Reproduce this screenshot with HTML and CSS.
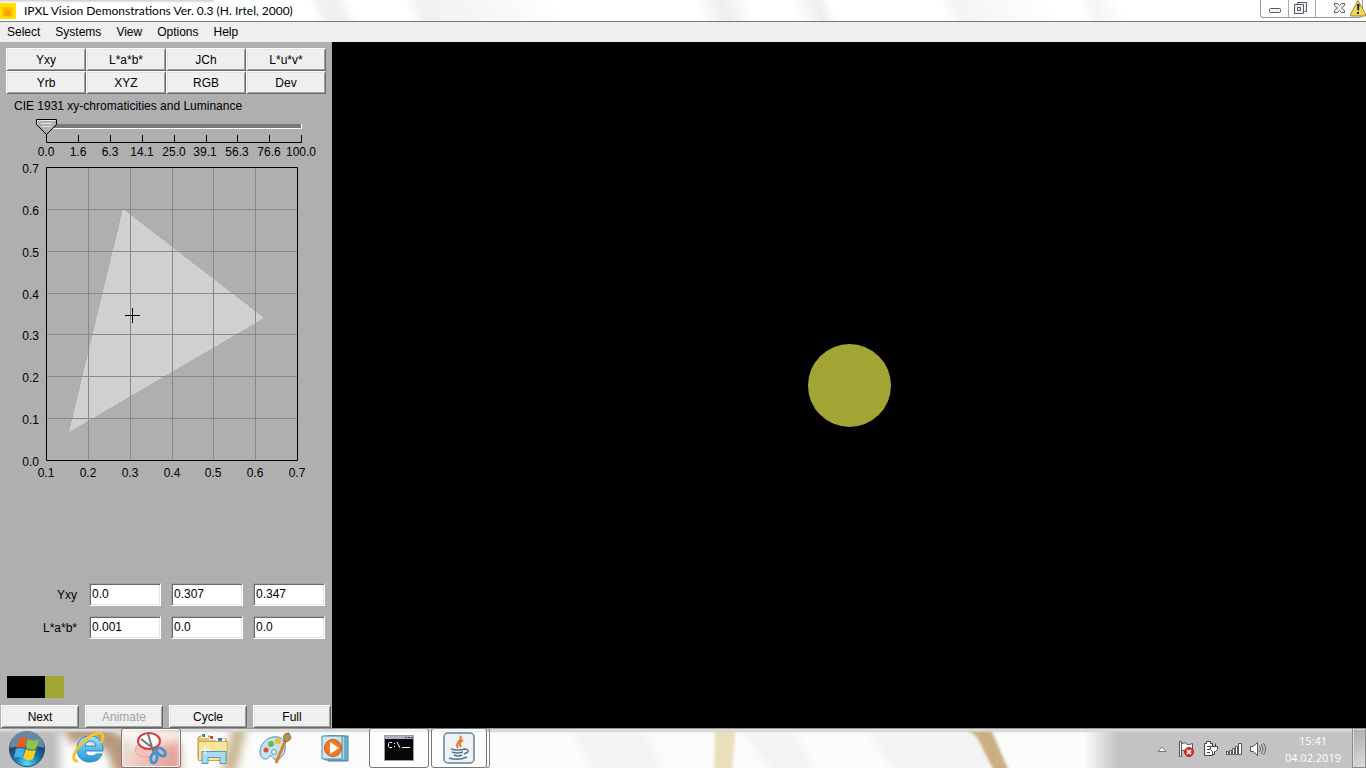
FILE: index.html
```html
<!DOCTYPE html>
<html lang="en">
<head>
<meta charset="utf-8">
<title>IPXL Vision Demonstrations Ver. 0.3 (H. Irtel, 2000)</title>
<link rel="stylesheet" href="styles.css">
</head>
<body>
<div class="screen">
  <header class="titlebar">
    <svg class="app-icon" viewBox="0 0 16 16" width="16" height="16" aria-hidden="true"><path fill="#ffe000" d="M0 0h16v16H0z"/><path fill="#ffc400" d="M2 4h11v10H2z"/><path fill="#ffab00" d="M4 6h7v7H4z"/><path fill="#ff9500" d="M6 8h4v4H6z"/></svg>
    <h1 class="title">IPXL Vision Demonstrations Ver. 0.3 (H. Irtel, 2000)</h1>
    <div class="window-controls">
      <button class="wc" aria-label="Minimize"><svg viewBox="0 0 27 17" width="27" height="17"><rect x="8.500" y="8.500" width="11" height="4" rx="1" fill="#f4f4f4" stroke="#555668"/></svg></button>
      <button class="wc wc-restore" aria-label="Restore"><svg viewBox="0 0 26 17" width="26" height="17"><path fill="#eee" stroke="#555668" d="M8.500 4.500v-2h9v9h-2M5.500 4.500h9v9h-9zM8.500 7.500h3v3h-3z"/></svg></button>
      <button class="wc wc-close" aria-label="Close"><svg viewBox="0 0 46 17" width="46" height="17"><path fill="#f4f4f4" stroke="#555668" d="M18.500 3.500h3l2 2 2-2h3v2l-3 2.500 3 2.500v2h-3l-2-2-2 2h-3v-2l3-2.500-3-2.500z"/></svg></button>
    </div>
    <svg class="warning" viewBox="0 0 16 17" width="16" height="17" aria-hidden="true"><path fill="#efd45e" stroke="#a28b30" d="M8 .5 15.500 14v2H.5v-2z"/><path fill="#222" d="M7 4h2.500L9 10.500H7.500zM7 12h2v2H7z"/></svg>
  </header>
  <nav class="menubar" aria-label="Application menu">
    <button class="menu">Select</button><button class="menu">Systems</button><button class="menu">View</button><button class="menu">Options</button><button class="menu">Help</button>
  </nav>
  <main class="workspace">
    <section class="panel" aria-label="Color controls">
      <div class="systems">
        <button class="btn">Yxy</button><button class="btn">L*a*b*</button><button class="btn">JCh</button><button class="btn">L*u*v*</button>
        <button class="btn">Yrb</button><button class="btn">XYZ</button><button class="btn">RGB</button><button class="btn">Dev</button>
      </div>
      <label class="caption" for="luminance">CIE 1931 xy-chromaticities and Luminance</label>
      <input class="slider" id="luminance" type="range" min="0" max="100" value="0">
      <svg class="scale" viewBox="0 0 332 27" width="332" height="27">
        <path d="M46.500 0v8.500h255V1M78.500 1v7M110.500 1v7M142.500 1v7M174.500 1v7M206.500 1v7M237.500 1v7M269.500 1v7" fill="none" stroke="#000"/>
        <g class="tick-x"><text x="46" y="22">0.0</text><text x="78" y="22">1.6</text><text x="110" y="22">6.3</text><text x="142" y="22">14.1</text><text x="174" y="22">25.0</text><text x="205" y="22">39.1</text><text x="237" y="22">56.3</text><text x="269" y="22">76.6</text><text x="301" y="22">100.0</text></g>
      </svg>
      <svg class="plot" viewBox="0 0 332 320" width="332" height="320" role="img" aria-label="xy chromaticity diagram">
        <path fill="#d0d0d0" shape-rendering="crispEdges" d="M123 48 264 157 69 271z"/>
        <path fill="none" stroke="#898989" d="M88.500 7v292M130.500 7v292M172.500 7v292M213.500 7v292M255.500 7v292M47 48.500h250M47 90.500h250M47 132.500h250M47 173.500h250M47 215.500h250M47 257.500h250"/>
        <path fill="none" stroke="#000" d="M46.500 6.500h251v293h-251zM125 154.500h15M132.500 147v15"/>
        <g class="tick-y"><text x="39" y="12">0.7</text><text x="39" y="54">0.6</text><text x="39" y="96">0.5</text><text x="39" y="138">0.4</text><text x="39" y="179">0.3</text><text x="39" y="221">0.2</text><text x="39" y="263">0.1</text><text x="39" y="305">0.0</text></g>
        <g class="tick-x"><text x="46" y="316">0.1</text><text x="88" y="316">0.2</text><text x="130" y="316">0.3</text><text x="172" y="316">0.4</text><text x="213" y="316">0.5</text><text x="255" y="316">0.6</text><text x="297" y="316">0.7</text></g>
      </svg>
      <div class="lower">
        <div class="fields">
          <label for="f-y">Yxy</label><input id="f-y" value="0.0"><input aria-label="x" value="0.307"><input aria-label="y" value="0.347">
          <label for="f-l">L*a*b*</label><input id="f-l" value="0.001"><input aria-label="a*" value="0.0"><input aria-label="b*" value="0.0">
        </div>
        <div class="swatches"><span></span><span></span><span class="olive"></span></div>
        <div class="actions"><button class="btn">Next</button><button class="btn" disabled>Animate</button><button class="btn">Cycle</button><button class="btn">Full</button></div>
      </div>
    </section>
    <section class="canvas" aria-label="Stimulus"><div class="disc"></div></section>
  </main>
  <footer class="taskbar">
    <svg class="backdrop" viewBox="0 0 1366 40" preserveAspectRatio="none" aria-hidden="true">
      <defs>
        <filter id="soft" x="-20%" y="-50%" width="140%" height="200%"><feGaussianBlur stdDeviation="4"/></filter>
        <filter id="soft2" x="-50%" y="-20%" width="200%" height="140%"><feGaussianBlur stdDeviation="1.500"/></filter>
        <linearGradient id="edge"><stop offset="0" stop-color="#c3c3c3" stop-opacity="0"/><stop offset=".12" stop-color="#c3c3c3"/><stop offset="1" stop-color="#c3c3c3"/></linearGradient>
        <linearGradient id="top" x2="0" y2="1"><stop offset="0" stop-color="#777"/><stop offset=".35" stop-color="#eee"/><stop offset=".6" stop-color="#ccc"/><stop offset="1" stop-color="#ddd" stop-opacity="0"/></linearGradient>
      </defs>
      <path fill="#fcfcfc" d="M0 0h1366v40H0z"/>
      <g filter="url(#soft)">
        <path fill="#bebebe" d="M-20-10h80v60h-80z"/>
        <path fill="#b59a7b" d="M60-5h40l34 20-6 30h-14l-6-20-18-14-18 6z"/>
        <path fill="#d98877" d="M120 30l22-12 38-4v34h-60z"/>
        <path fill="#c9b797" d="M234-5h14l-12 50h-16z"/>
        <path fill="#f3f3f3" d="M570 0h72l22 44h-70zM740 0h52l24 44h-44zM866 0h124v44h-96z"/>
      </g>
      <g filter="url(#soft2)"><path fill="#e9dfbd" d="M715-3h21l-4 46h-18z"/><path fill="#cbaf83" d="M962-3h27l20 46h-15L977 9z"/></g>
      <path fill="url(#edge)" d="M1084 0h282v40h-282z"/>
      <path fill="url(#top)" d="M0 0h1366v5H0z"/>
    </svg>
    <button class="start" aria-label="Start">
      <svg viewBox="0 0 38 38" width="38" height="38"><defs><radialGradient id="orb" cx=".5" cy=".92" r=".85"><stop offset="0" stop-color="#4fe0ff"/><stop offset=".4" stop-color="#1a78ad"/><stop offset=".8" stop-color="#163c66"/></radialGradient></defs><circle cx="19" cy="19" r="17.500" fill="url(#orb)" stroke="#2b4d70"/><path fill="#bcd1df" opacity=".5" d="M2 18a17 17 0 0 1 34 0C28 15 11 15 2 18z"/><path fill="#ea5b22" d="M11 9q4-3 8-1l-2 10q-4-2-9 0z"/><path fill="#8dc63f" d="M20 9q4 3 11 0l-3 10q-5 2-10-1z"/><path fill="#46b0ea" d="M8 19q4-2 9 0l-3 9q-4-2-8 0z"/><path fill="#ffc91d" d="M18 19q4 3 10 1l-3 9q-5 3-10-1z"/></svg>
    </button>
    <div class="tasks">
      <button class="task" aria-label="Internet Explorer"><svg viewBox="0 0 34 34" width="34" height="34"><defs><linearGradient id="ie" x2="0" y2="1"><stop offset="0" stop-color="#9be3fb"/><stop offset="1" stop-color="#2694d4"/></linearGradient></defs><path fill="url(#ie)" stroke="#278bc4" fill-rule="evenodd" d="M31 20H13q1 5 6 5 4 0 5-2h6q-3 8-12 8C10 31 5 26 5 18S10 5 18 5s14 6 13 15zM13 15h11q-1-5-5.500-5T13 15z"/><path fill="none" stroke="#f6c129" stroke-width="3" d="M6 30C-1 31 1 20 11 11S31-1 31 6q0 3-2 6"/></svg></button>
      <button class="task open snip" aria-label="Snipping Tool"><svg viewBox="0 0 34 36" width="34" height="36"><ellipse cx="12" cy="20" rx="11" ry="7" fill="#f5bfba" stroke="#e8a09c"/><ellipse cx="15" cy="11" rx="11" ry="8" fill="#fff" fill-opacity=".9" stroke="#d8393e" stroke-width="2"/><path fill="none" stroke="#71777b" stroke-width="2" d="M7 9l17 13M14 4l6 20"/><ellipse cx="27" cy="22" rx="3" ry="5" transform="rotate(-50 27 22)" fill="none" stroke="#3b96d0" stroke-width="3"/><ellipse cx="20" cy="28" rx="3" ry="5" transform="rotate(10 20 28)" fill="none" stroke="#3b96d0" stroke-width="3"/></svg></button>
      <button class="task" aria-label="Explorer"><svg viewBox="0 0 34 34" width="34" height="34"><path fill="#e7c665" stroke="#b8923d" d="M4 5h10l2 3h14v20H2V7z"/><path fill="#fff" d="M5 4h7v3H5zM13 6h8v3h-8zM20 8h9v3h-9z"/><path fill="#27a344" d="M6 3h3v3H6z"/><path fill="#d14831" d="M14 5h3v3h-3z"/><path fill="#268bcb" d="M22 7h4v3h-4z"/><path fill="#f8e49d" stroke="#cca64c" d="M2.500 10.500h29l-1 19h-28z"/><path fill="#a9dbed" stroke="#529cc0" d="M6 20.500h24v12h-6v-6H12v6H6z"/><path stroke="#fff" d="M9 15v9M5 19h9"/></svg></button>
      <button class="task" aria-label="Paint"><svg viewBox="0 0 34 34" width="34" height="34"><path fill="#c4e2ef" stroke="#4f91b5" d="M20 6C9 4 1 15 2 22c1 6 6 8 9 4 3-5 4 6 10 2 8-4 9-20-1-22z"/><circle cx="8" cy="19" r="2.500" fill="#e34c3a"/><circle cx="13" cy="13" r="3" fill="#68b948"/><circle cx="20" cy="10" r="3" fill="#efbd2c"/><circle cx="16" cy="21" r="2.500" fill="#fff" stroke="#4f91b5"/><path stroke="#d58029" stroke-width="3" d="M28 8L18 32"/><path fill="#b88d58" stroke="#8f6a3d" d="M26 9q-2-7 5-7l2 5q-2 4-6 4z"/></svg></button>
      <button class="task" aria-label="Media Player"><svg viewBox="0 0 34 34" width="34" height="34"><path fill="#75b9da" stroke="#447d9a" d="M8 5h20v25H8z"/><path fill="#a9d6e9" stroke="#508ba7" d="M5 5h20v24H5z"/><path fill="#c9e6f1" stroke="#508ba7" d="M2 5h20v23H2z"/><circle cx="13" cy="17" r="8.500" fill="#f37921" stroke="#ca5613"/><path fill="#fff" d="M10 11l9 6-9 6z"/></svg></button>
      <button class="task open" aria-label="Command Prompt"><svg viewBox="0 0 30 26" width="30" height="26"><path fill="#080808" stroke="#969da5" d="M.5.500h29v25H.5z"/><path fill="#aab3bf" d="M1 1h28v3H1z"/><path stroke="#39424f" stroke-dasharray="2 1" d="M21 2.500h8"/><path fill="none" stroke="#fff" d="M8 7.500H5.500L4.500 8.500v3l1 1H8M10 8.500h1M10 11.500h1M13 7l3 6M18 12.500h8"/></svg></button>
      <button class="task open java" aria-label="Java"><svg viewBox="0 0 32 32" width="32" height="32"><rect x="1" y="1" width="30" height="30" rx="4" fill="#eff1f2" stroke="#60849b" stroke-width="1.500"/><path fill="none" stroke="#ee7625" stroke-width="2" d="M17 4c4 4-6 6-2 12M20 8c-4 2-4 4-2 7"/><path fill="none" stroke="#4d7797" stroke-width="1.500" d="M8 17q7 2 14 0M9 20q5 2 11 0M11 23q4 2 8 0M21 17q5 0 4 3l-4 2M6 26q9 3 18-1"/></svg></button>
      <span class="stack"></span>
    </div>
    <div class="tray">
      <button class="tray-icon" aria-label="Show hidden icons"><svg viewBox="0 0 16 16" width="16" height="16"><path fill="#fff" stroke="#6b7480" d="M4 10.500h8L8 6z"/></svg></button>
      <button class="tray-icon" aria-label="Action Center"><svg viewBox="0 0 16 16" width="16" height="16"><path fill="#fff" stroke="#555" d="M1.500.5h2v15h-2zM3.500 2.500q4-2 6 1 3 0 5-1v7h-11z"/><circle cx="11" cy="11" r="4.500" fill="#d83b30" stroke="#b11e18"/><path stroke="#fff" stroke-width="1.500" d="M9 9l4 4M13 9l-4 4"/></svg></button>
      <button class="tray-icon" aria-label="Power"><svg viewBox="0 0 16 16" width="16" height="16"><path fill="#fff" stroke="#444" d="M2.500 2.500h2v-2h4v2h2v12h-8z"/><path fill="none" stroke="#444" d="M5 5.500h3M5 8.500h3M5 11.500h3"/><path fill="#fff" stroke="#444" d="M8.500 5.500h7v3l-2 2h-1v3h-2v-3l-2-2zM10.500 2.500v3M13.500 2.500v3"/></svg></button>
      <button class="tray-icon" aria-label="Network"><svg viewBox="0 0 16 16" width="16" height="16"><path fill="#fff" stroke="#555" d="M.5 10.500h2v3h-2zM3.500 9.500h2v4h-2zM6.500 7.500h2v6h-2zM9.500 5.500h2v8h-2zM12.500 2.500h3v11h-3z"/></svg></button>
      <button class="tray-icon" aria-label="Volume"><svg viewBox="0 0 16 16" width="16" height="16"><path fill="#fff" stroke="#555" d="M.5 5.500h3l4-4v13l-4-4h-3z"/><path fill="none" stroke="#666" d="M9.500 5q2 3 0 6M11.500 3q3 5 0 10M13.500 2q4 6 0 12"/></svg></button>
      <div class="clock"><time>15:41</time><time>04.02.2019</time></div>
      <button class="show-desktop" aria-label="Show desktop"></button>
    </div>
  </footer>
</div>
</body>
</html>
```

FILE: styles.css
```css
* { box-sizing: border-box; }
body { margin: 0; font: 12px/14px "Liberation Sans", Arial, sans-serif; color: #000; }
button, input { font: inherit; color: inherit; margin: 0; border-radius: 0; }
button { padding: 0; border: 0; background: none; }
svg { display: block; flex: none; }
.screen { display: flex; flex-direction: column; min-height: 100vh; }

.titlebar {
  position: relative; display: flex; align-items: flex-start; height: 22px; padding-top: 3px;
  border-bottom: 1px solid #787878; overflow: hidden;
  background:
    linear-gradient(#ccc, #ccc0) 0 0 / 214px 3px no-repeat,
    linear-gradient(68deg, #fff0 23%, #f0f0f0 24%, #f0f0f0 25%, #fff0 26%, #fff0 30%, #f1f1f1 31%, #fafafa 38%, #fff0 41%, #fff0 51%, #eee 53%, #fff0 55%, #fff0 58%, #eee 60%, #fff0 61%, #fff0 69%, #f4f4f4 70%, #fff0 77%, #fff0 79%, #f5f5f5 80%, #fff0 82%) #fff;
}
.title { flex: 1; margin: 0 0 0 8px; font: 12px/16px Lato, "Open Sans", sans-serif; }
.window-controls {
  display: flex; height: 18px; margin: -3px 3px 0 0;
  border: 1px solid #999; border-top: 0; border-radius: 0 0 4px 4px;
}
.wc-restore, .wc-close { border-left: 1px solid #aaa; }
.warning { position: absolute; right: 0; top: 0; }

.menubar { display: flex; align-items: center; gap: 15px; height: 20px; padding-left: 7px; background: #efefef; }

.workspace { flex: 1; display: flex; }
.panel { display: flex; flex-direction: column; width: 332px; flex: none; padding-top: 6px; background: #afafaf; }
.systems { display: grid; grid-template-columns: repeat(4, 1fr); margin: 0 6px 5px; }
.btn {
  height: 23px; background: #efefef; border: 1px solid;
  border-color: #fff #696969 #696969 #fff;
  box-shadow: inset 1px 1px #e3e3e3, inset -1px -1px #a0a0a0;
}
.btn:disabled { color: #a3a3a3; }
.caption { margin-left: 14px; }
.slider {
  appearance: none; width: 276px; height: 16px; margin: 6px 0 0 36px;
  background:
    linear-gradient(#787878, #787878) 10px 5px / 255px 4px no-repeat,
    linear-gradient(#fff, #fff) 10px 5px / 256px 5px no-repeat;
}
.slider::-webkit-slider-thumb {
  appearance: none; width: 21px; height: 16px;
  background: url("data:image/svg+xml,%3Csvg xmlns='http://www.w3.org/2000/svg' width='21' height='16'%3E%3Cpath d='M.5 .5h20v5l-10 10l-10-10z' fill='%23afafaf' stroke='%23000'/%3E%3Cpath d='M1.500 5V1.500h18M5 4.500h11M6 7.500h9' fill='none' stroke='%23e6e6e6'/%3E%3C/svg%3E");
}
.scale { margin-top: -1px; }
.scale text, .plot text { font: 12px "Liberation Sans", Arial, sans-serif; }
.tick-x { text-anchor: middle; }
.tick-y { text-anchor: end; }

.lower { margin-top: auto; }
.fields { display: grid; grid-template-columns: 68px repeat(3, 1fr); gap: 10px; align-items: center; margin: 0 7px 37px 11px; }
.fields label { padding-right: 2px; text-align: right; }
.fields input {
  width: 100%; min-width: 0; height: 23px; padding: 0 2px 1px; background: #fff; border: 1px solid;
  border-color: #a0a0a0 #fff #fff #a0a0a0;
  box-shadow: inset 1px 1px #696969, inset -1px -1px #e3e3e3;
}
.swatches { display: flex; margin: 0 0 7px 7px; }
.swatches span { width: 19px; height: 22px; background: #000; }
.swatches .olive { background: #a2a434; }
.actions { display: grid; grid-template-columns: repeat(4, 1fr); gap: 6px; margin: 0 1px; }

.canvas { flex: 1; display: flex; align-items: center; justify-content: center; background: #000; }
.disc { width: 83px; height: 83px; border-radius: 50%; background: #a2a434; }

.taskbar { position: relative; display: flex; height: 40px; overflow: hidden; }
.backdrop { position: absolute; inset: 0; width: 100%; height: 100%; }
.start, .tasks, .tray { position: relative; }
.start { padding: 1px 0 0 8px; }
.tasks { display: flex; flex: 1; gap: 2px; margin-left: 13px; }
.task { display: flex; align-items: center; justify-content: center; width: 60px; }
.open { border: 1px solid #777; border-radius: 3px; background: #fff9; box-shadow: inset 0 0 0 1px #fffc; }
.snip { background: linear-gradient(100deg, #fffb, #f1b5ae66); }
.java { width: 56px; }
.stack { width: 4px; margin-left: -3px; border: 1px solid #888; border-left: 0; border-radius: 0 3px 3px 0; }
.tray { display: flex; align-items: center; gap: 8px; color: #fff; }
.tray-icon { padding-top: 2px; }
.clock { display: flex; flex-direction: column; align-items: center; margin: 2px 11px 0 11px; font: 11px/17px "Open Sans", "Noto Sans", sans-serif; }
.show-desktop { align-self: stretch; width: 14px; margin-left: -8px; border: 1px solid #8a8a8a; background: linear-gradient(135deg, #aaa, #ddd); box-shadow: inset 1px 1px #ddd; }
```
